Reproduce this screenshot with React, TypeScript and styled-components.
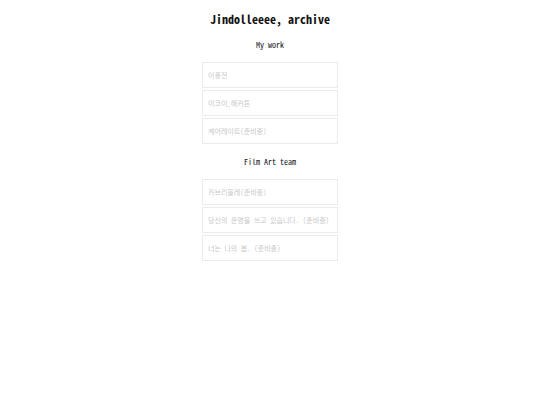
import React from 'react'
import styled, {createGlobalStyle} from 'styled-components'

const sections = [
  {
    title: 'My work',
    items: ['이중전', '이코이_해커톤', '케어레이트(준비중)'],
  },
  {
    title: 'Film Art team',
    items: [
      '카브리올레(준비중)',
      '당신의 운명을 쓰고 있습니다. (준비중)',
      '너는 나의 봄. (준비중)',
    ],
  },
]

const GlobalStyle = createGlobalStyle`
  html, body {
    margin: 0;
    padding: 0;
    background: #fff;
  }

  body {
    font-family: "Noto Sans Mono CJK KR", "DejaVu Sans Mono", "Noto Sans CJK KR", monospace;
    color: #111;
  }
`

const App = () => {
  return (
    <>
      <GlobalStyle />
      <Page>
        <Title>Jindolleeee, archive</Title>
        {sections.map((section) => (
          <Section key={section.title}>
            <SectionTitle>{section.title}</SectionTitle>
            <List>
              {section.items.map((item) => (
                <Item key={item} href="#">
                  {item}
                </Item>
              ))}
            </List>
          </Section>
        ))}
      </Page>
    </>
  )
}

export default App

const Page = styled.main`
  display: flex;
  flex-direction: column;
  align-items: center;
  padding-top: 11px;
`

const Title = styled.h1`
  margin: 0;
  font-size: 12px;
  line-height: 16px;
  font-weight: 700;
`

const Section = styled.section`
  display: flex;
  flex-direction: column;
  align-items: center;
  width: 136px;
`

const SectionTitle = styled.h2`
  margin: 12px 0 11px;
  font-size: 8px;
  line-height: 12px;
  font-weight: 400;
`

const List = styled.div`
  display: flex;
  flex-direction: column;
  gap: 2px;
  width: 100%;
`

const Item = styled.a`
  display: flex;
  align-items: center;
  box-sizing: border-box;
  height: 26px;
  padding: 0 5px 1px;
  border: 1px solid #ebebeb;
  color: #c8c8c8;
  font-size: 7px;
  text-decoration: none;
  white-space: nowrap;
`
